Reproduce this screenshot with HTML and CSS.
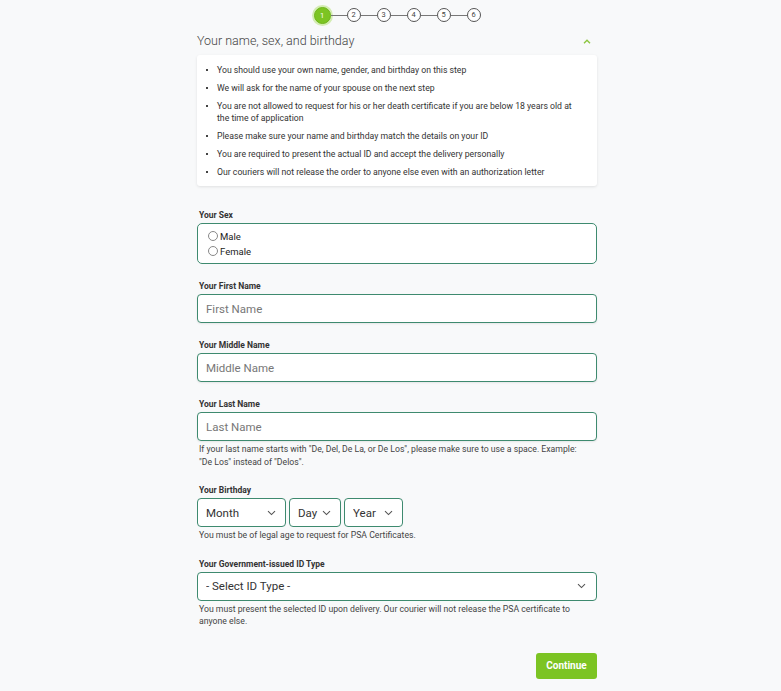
FILE: index.html
```html
<!DOCTYPE html>
<html lang="en">
<head>
    <meta charset="UTF-8">
    <meta name="viewport" content="width=device-width, initial-scale=1.0">
    <title>Your name, sex, and birthday</title>
    <link rel="stylesheet" href="styles.css">
</head>
<body>
    <div class="page">
        <div class="stepper">
            <span class="step active">1</span><span class="line"></span>
            <span class="step">2</span><span class="line"></span>
            <span class="step">3</span><span class="line"></span>
            <span class="step">4</span><span class="line"></span>
            <span class="step">5</span><span class="line"></span>
            <span class="step">6</span>
        </div>

        <div class="section-head">
            <h1>Your name, sex, and birthday</h1>
            <svg class="chevron-up" width="8" height="5" viewBox="0 0 8 5"><path d="M1 4.2 L4 1.3 L7 4.2" fill="none" stroke="#8cc63f" stroke-width="1.4"/></svg>
        </div>

        <div class="info-card">
            <ul>
                <li>You should use your own name, gender, and birthday on this step</li>
                <li>We will ask for the name of your spouse on the next step</li>
                <li>You are not allowed to request for his or her death certificate if you are below 18 years old at the time of application</li>
                <li>Please make sure your name and birthday match the details on your ID</li>
                <li>You are required to present the actual ID and accept the delivery personally</li>
                <li>Our couriers will not release the order to anyone else even with an authorization letter</li>
            </ul>
        </div>

        <div class="field">
            <label class="field-label">Your Sex</label>
            <div class="radio-box">
                <label class="radio"><input type="radio" name="sex" value="male">Male</label>
                <label class="radio"><input type="radio" name="sex" value="female">Female</label>
            </div>
        </div>

        <div class="field">
            <label class="field-label" for="first">Your First Name</label>
            <input class="text-input" type="text" id="first" placeholder="First Name">
        </div>

        <div class="field">
            <label class="field-label" for="middle">Your Middle Name</label>
            <input class="text-input" type="text" id="middle" placeholder="Middle Name">
        </div>

        <div class="field">
            <label class="field-label" for="last">Your Last Name</label>
            <input class="text-input" type="text" id="last" placeholder="Last Name">
            <p class="help">If your last name starts with "De, Del, De La, or De Los", please make sure to use a space. Example: "De&nbsp;Los" instead of "Delos".</p>
        </div>

        <div class="field">
            <label class="field-label">Your Birthday</label>
            <div class="birthday">
                <select class="select month"><option>Month</option></select>
                <select class="select day"><option>Day</option></select>
                <select class="select year"><option>Year</option></select>
            </div>
            <p class="help">You must be of legal age to request for PSA Certificates.</p>
        </div>

        <div class="field">
            <label class="field-label" for="idtype">Your Government-issued ID Type</label>
            <select class="select wide" id="idtype"><option>- Select ID Type -</option></select>
            <p class="help">You must present the selected ID upon delivery. Our courier will not release the PSA certificate to anyone else.</p>
        </div>

        <div class="actions">
            <button class="btn-continue">Continue</button>
        </div>
    </div>
</body>
</html>
```

FILE: styles.css
```css
body {
    margin: 0;
    padding: 0;
    background-color: #f8f9fa;
    font-family: Roboto, "Liberation Sans", Arial, sans-serif;
    color: #333;
}

.page {
    width: 400px;
    margin: 0 auto;
    padding: 6px 0 12px 13px;
}

/* stepper */
.stepper {
    display: flex;
    justify-content: center;
    align-items: center;
    height: 18px;
}
.step {
    width: 12px;
    height: 12px;
    border: 1px solid #555;
    border-radius: 50%;
    font-size: 7.5px;
    line-height: 12px;
    text-align: center;
    color: #444;
    background: #fff;
}
.step.active {
    width: 15px;
    height: 15px;
    line-height: 15px;
    border: 1px solid #6fb51a;
    background: #7cc423;
    color: #fff;
    box-shadow: 0 0 0 2px #d3ecb2;
}
.line {
    width: 16px;
    height: 1px;
    background: #777;
}

/* section heading */
.section-head {
    display: flex;
    justify-content: space-between;
    align-items: center;
    height: 20px;
    margin-top: 6px;
}
h1 {
    margin: 0;
    font-size: 12.5px;
    font-weight: 300;
    color: #444;
}
.chevron-up {
    margin-right: 6px;
    margin-top: 3px;
}

.info-card {
    background: #fff;
    margin-top: 5px;
    border-radius: 3px;
    box-shadow: 0 1px 3px rgba(0, 0, 0, 0.1);
    padding: 9px 16px 8px 9px;
}
.info-card ul {
    margin: 0;
    padding: 0;
    list-style: none;
}
.info-card li {
    position: relative;
    padding-left: 11px;
    font-size: 8.7px;
    line-height: 12px;
    color: #333;
    margin-bottom: 6px;
}
.info-card li:last-child {
    margin-bottom: 0;
}
.info-card li::before {
    content: "";
    position: absolute;
    left: 0;
    top: 5px;
    width: 2px;
    height: 2px;
    background: #444;
}

/* fields */
.field {
    margin-top: 16px;
}
.info-card + .field {
    margin-top: 23px;
}
.field-label {
    display: block;
    padding-left: 2px;
    font-size: 8.5px;
    font-weight: 700;
    line-height: 12px;
    color: #333;
    margin-bottom: 2px;
}

.radio-box {
    height: 39px;
    border: 1px solid #3e8a6f;
    border-radius: 5px;
    background: #fff;
    padding: 0 10px;
    display: flex;
    flex-direction: column;
    justify-content: center;
}
.radio {
    display: flex;
    align-items: center;
    gap: 2px;
    font-size: 9.5px;
    line-height: 15px;
    color: #222;
}
.radio input {
    appearance: none;
    margin: 0;
    width: 10px;
    height: 10px;
    border: 1px solid #888;
    border-radius: 50%;
    background: #fff;
}

.text-input {
    box-sizing: border-box;
    display: block;
    width: 100%;
    height: 29px;
    border: 1px solid #3e8a6f;
    border-radius: 4px;
    background: #fff;
    padding: 0 8px;
    font-family: inherit;
    font-size: 11.5px;
    color: #333;
    box-shadow: 0 1px 2px rgba(0, 0, 0, 0.08);
}
.text-input::placeholder {
    color: #777;
}
.text-input:focus {
    outline: none;
}

.select {
    box-sizing: border-box;
    appearance: none;
    height: 29px;
    border: 1px solid #3e8a6f;
    border-radius: 4px;
    background: #fff url("data:image/svg+xml,%3Csvg xmlns='http://www.w3.org/2000/svg' width='9' height='6' viewBox='0 0 9 6'%3E%3Cpath d='M1 1.2 L4.5 4.6 L8 1.2' fill='none' stroke='%23555' stroke-width='1.1'/%3E%3C/svg%3E") no-repeat right 9px center;
    padding: 0 8px;
    font-family: inherit;
    font-size: 11.5px;
    color: #333;
}
.birthday {
    display: flex;
    gap: 3px;
}
.month {
    width: 89px;
}
.day {
    width: 52px;
}
.year {
    width: 59px;
}
.wide {
    width: 100%;
    display: block;
    background-position: right 10px center;
}

.help {
    margin: 2px 0 0;
    padding-left: 2px;
    font-size: 8.7px;
    line-height: 12.5px;
    color: #444;
}

.actions {
    display: flex;
    justify-content: flex-end;
    margin-top: 25px;
}
.btn-continue {
    width: 61px;
    height: 26px;
    border: none;
    border-radius: 3px;
    background: #7cc423;
    color: #fff;
    font-family: inherit;
    font-size: 10px;
    font-weight: 700;
    cursor: pointer;
}
```
